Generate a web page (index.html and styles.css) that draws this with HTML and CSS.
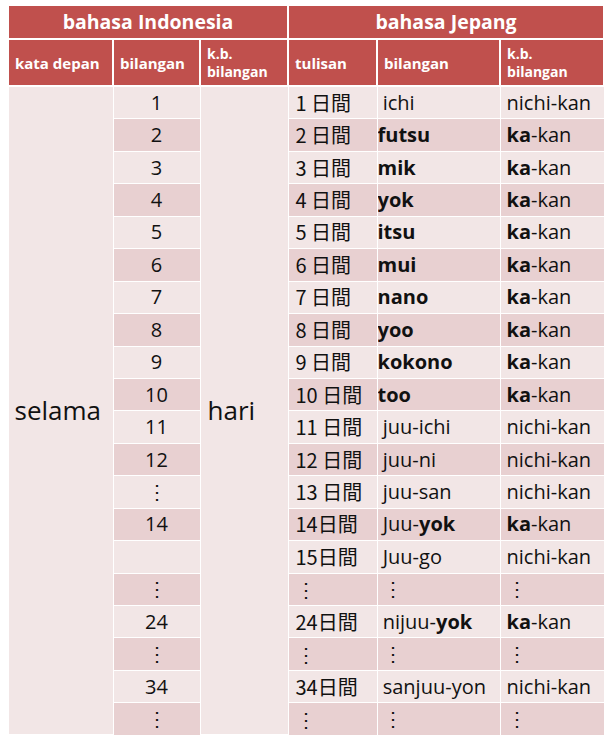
FILE: index.html
```html
<!DOCTYPE html>
<html lang="id">
<head>
<meta charset="utf-8">
<title>bahasa Indonesia / bahasa Jepang</title>
<link rel="stylesheet" href="styles.css">
</head>
<body>
<table class="tbl">
  <colgroup>
    <col class="c1"><col class="c2"><col class="c3"><col class="c4"><col class="c5"><col class="c6">
  </colgroup>
  <thead>
    <tr class="h1">
      <th colspan="3">bahasa Indonesia</th>
      <th colspan="3">bahasa Jepang</th>
    </tr>
    <tr class="h2">
      <th>kata depan</th>
      <th>bilangan</th>
      <th><span class="two">k.b.</span><span class="two">bilangan</span></th>
      <th>tulisan</th>
      <th>bilangan</th>
      <th><span class="two">k.b.</span><span class="two">bilangan</span></th>
    </tr>
  </thead>
  <tbody>
    <tr class="odd"><td class="span big" rowspan="20">selama</td><td class="num">1</td><td class="span big hari" rowspan="20">hari</td><td class="jp">1 日間</td><td class="bil">&nbsp;ichi</td><td class="kb">nichi-kan</td></tr>
    <tr class="even"><td class="num">2</td><td class="jp">2 日間</td><td class="bil"><b>futsu</b></td><td class="kb"><b>ka</b>-kan</td></tr>
    <tr class="odd"><td class="num">3</td><td class="jp">3 日間</td><td class="bil"><b>mik</b></td><td class="kb"><b>ka</b>-kan</td></tr>
    <tr class="even"><td class="num">4</td><td class="jp">4 日間</td><td class="bil"><b>yok</b></td><td class="kb"><b>ka</b>-kan</td></tr>
    <tr class="odd"><td class="num">5</td><td class="jp">5 日間</td><td class="bil"><b>itsu</b></td><td class="kb"><b>ka</b>-kan</td></tr>
    <tr class="even"><td class="num">6</td><td class="jp">6 日間</td><td class="bil"><b>mui</b></td><td class="kb"><b>ka</b>-kan</td></tr>
    <tr class="odd"><td class="num">7</td><td class="jp">7 日間</td><td class="bil"><b>nano</b></td><td class="kb"><b>ka</b>-kan</td></tr>
    <tr class="even"><td class="num">8</td><td class="jp">8 日間</td><td class="bil"><b>yoo</b></td><td class="kb"><b>ka</b>-kan</td></tr>
    <tr class="odd"><td class="num">9</td><td class="jp">9 日間</td><td class="bil"><b>kokono</b></td><td class="kb"><b>ka</b>-kan</td></tr>
    <tr class="even"><td class="num">10</td><td class="jp">10 日間</td><td class="bil"><b>too</b></td><td class="kb"><b>ka</b>-kan</td></tr>
    <tr class="odd"><td class="num">11</td><td class="jp">11 日間</td><td class="bil">&nbsp;juu-ichi</td><td class="kb">nichi-kan</td></tr>
    <tr class="even"><td class="num">12</td><td class="jp">12 日間</td><td class="bil">&nbsp;juu-ni</td><td class="kb">nichi-kan</td></tr>
    <tr class="odd"><td class="num">⋮</td><td class="jp">13 日間</td><td class="bil">&nbsp;juu-san</td><td class="kb">nichi-kan</td></tr>
    <tr class="even"><td class="num">14</td><td class="jp">14日間</td><td class="bil">&nbsp;Juu-<b>yok</b></td><td class="kb"><b>ka</b>-kan</td></tr>
    <tr class="odd"><td class="num"></td><td class="jp">15日間</td><td class="bil">&nbsp;Juu-go</td><td class="kb">nichi-kan</td></tr>
    <tr class="even"><td class="num">⋮</td><td class="jp">⋮</td><td class="bil">&nbsp;⋮</td><td class="kb">⋮</td></tr>
    <tr class="odd"><td class="num">24</td><td class="jp">24日間</td><td class="bil">&nbsp;nijuu-<b>yok</b></td><td class="kb"><b>ka</b>-kan</td></tr>
    <tr class="even"><td class="num">⋮</td><td class="jp">⋮</td><td class="bil">&nbsp;⋮</td><td class="kb">⋮</td></tr>
    <tr class="odd"><td class="num">34</td><td class="jp">34日間</td><td class="bil">&nbsp;sanjuu-yon</td><td class="kb">nichi-kan</td></tr>
    <tr class="even"><td class="num">⋮</td><td class="jp">⋮</td><td class="bil">&nbsp;⋮</td><td class="kb">⋮</td></tr>
  </tbody>
</table>
</body>
</html>
```
FILE: styles.css
```css
html, body {
  margin: 0;
  padding: 0;
  background: #ffffff;
}
body {
  padding: 6px 0 0 7px;
  font-family: "Open Sans", "Noto Sans CJK JP", sans-serif;
  color: #111111;
}
.tbl {
  border-collapse: collapse;
  table-layout: fixed;
  width: 596px;
}
.c1 { width: 105px; }
.c2 { width: 87px; }
.c3 { width: 88px; }
.c4 { width: 89px; }
.c5 { width: 123px; }
.c6 { width: 104px; }

.tbl th, .tbl td {
  border: 1px solid #ffffff;
  padding: 0;
  overflow: hidden;
  white-space: nowrap;
}
.tbl th {
  background: #c0504d;
  color: #ffffff;
  font-weight: 700;
  text-align: left;
  border-width: 2px;
}
.tbl .h1 th {
  height: 32px;
  font-size: 19.5px;
  text-align: center;
  line-height: 22px;
  border-top: none;
  padding: 0;
}
.tbl .h2 th {
  height: 45px;
  font-size: 15px;
  line-height: 18px;
  padding: 0 0 0 6px;
}
.two {
  display: block;
  font-size: 14px;
  line-height: 18px;
}
.tbl td {
  font-size: 20px;
  line-height: 24px;
  height: 31.45px;
  vertical-align: middle;
}
.tbl .odd td { background: #f2e6e6; }
.tbl .even td { background: #e8d0d1; }
.tbl td.span {
  background: #f2e6e6;
  border-top-width: 2px;
}
.tbl td.big {
  font-size: 26px;
  padding-left: 6px;
  padding-bottom: 2px;
}
.tbl td.hari { padding-left: 7px; }
.tbl td.num { text-align: center; }
.tbl td.jp {
  padding-left: 7px;
  font-family: "Noto Sans CJK JP", "Open Sans", sans-serif;
  font-size: 20px;
}
.tbl td.bil { padding-left: 0; }
.tbl td.kb { padding-left: 6px; }
b { font-weight: 700; }
.tbl tbody tr:last-child td { border-bottom: none; }
```
